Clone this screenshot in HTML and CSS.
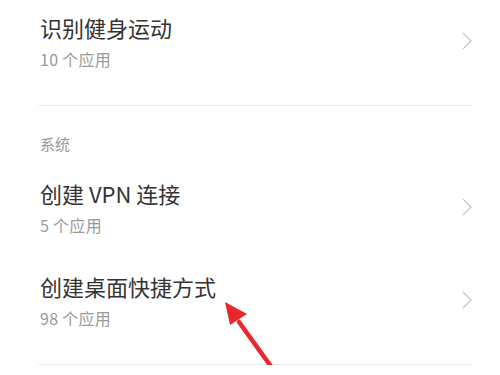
FILE: index.html
```html
<!DOCTYPE html>
<html lang="zh-CN">
<head>
<meta charset="UTF-8" />
<meta name="viewport" content="width=device-width, initial-scale=1" />
<title>特殊应用权限</title>
<link rel="stylesheet" href="styles.css">
</head>
<body>

<div class="page">
  <!-- 上一组的最后一项 -->
  <div class="group">
    <div class="item">
      <div class="item-text">
        <div class="item-title">识别健身运动</div>
        <div class="item-sub">10 个应用</div>
      </div>
      <svg class="chevron" viewBox="0 0 10 18"><path d="M1 1 L9 9 L1 17" /></svg>
    </div>
  </div>

  <!-- 系统 -->
  <div class="group">
    <div class="group-title">系统</div>
    <div class="item">
      <div class="item-text">
        <div class="item-title">创建 VPN 连接</div>
        <div class="item-sub">5 个应用</div>
      </div>
      <svg class="chevron" viewBox="0 0 10 18"><path d="M1 1 L9 9 L1 17" /></svg>
    </div>
    <div class="item">
      <div class="item-text">
        <div class="item-title">创建桌面快捷方式</div>
        <div class="item-sub">98 个应用</div>
      </div>
      <svg class="chevron" viewBox="0 0 10 18"><path d="M1 1 L9 9 L1 17" /></svg>
    </div>
  </div>

  <!-- 标注箭头 -->
  <svg class="pointer" viewBox="0 0 60 80">
    <path d="M14 20 L50 70" />
    <polygon points="0,0 5,23 22,12" />
  </svg>
</div>

</body>
</html>
```

FILE: styles.css
```css
body {
  font-family: 'Noto Sans CJK SC', 'Noto Sans', sans-serif;
  background: #fff;
  margin: 0;
  color: #333;
  overflow: hidden;
}
.page {
  position: relative;
  margin-top: -3px;
  padding: 0 27px 0 40px;
}
.group {
  padding-bottom: 15px;
  border-bottom: 1px solid #ececec;
  margin-left: -2px;
  padding-left: 2px;
}
.group-title {
  margin-top: 28px;
  padding-bottom: 9px;
  font-size: 15px;
  line-height: 20px;
  color: #999;
}
.item {
  display: flex;
  align-items: center;
  padding: 15px 0 21px;
}
.item-text {
  flex: 1;
}
.item-title {
  font-size: 22px;
  line-height: 30px;
  color: #333;
}
.item-sub {
  margin-top: 7px;
  font-size: 16px;
  letter-spacing: 0.3px;
  line-height: 20px;
  color: #9a9a9a;
}
.chevron {
  width: 10px;
  height: 18px;
  margin-right: 1px;
  flex-shrink: 0;
}
.chevron path {
  fill: none;
  stroke: #c9c9c9;
  stroke-width: 1.4;
}
.pointer {
  position: absolute;
  left: 225px;
  top: 305px;
  width: 60px;
  height: 80px;
}
.pointer path {
  stroke: #e8282c;
  stroke-width: 4.5;
  stroke-linecap: round;
  fill: none;
}
.pointer polygon {
  fill: #e8282c;
}
```
